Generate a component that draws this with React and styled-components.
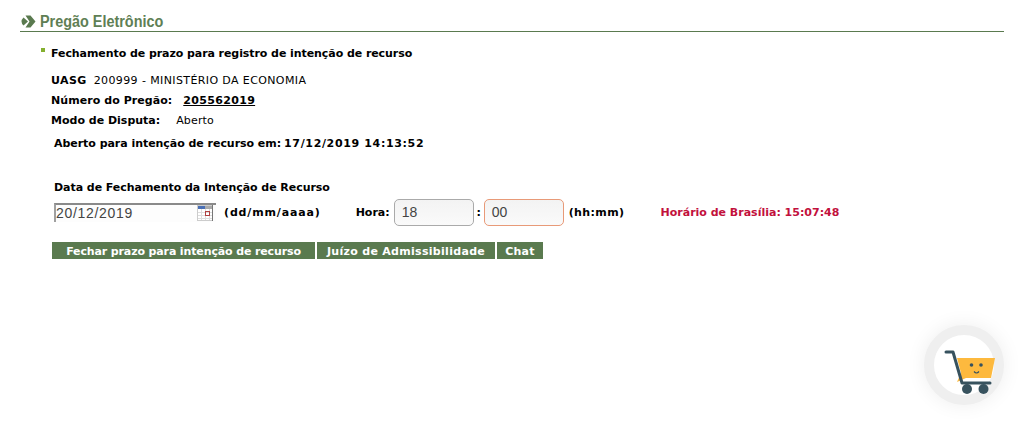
import React from 'react';
import styled, { createGlobalStyle } from 'styled-components';

const GlobalStyle = createGlobalStyle`
  html, body { margin: 0; padding: 0; background: #fff; }
  body { font-family: "DejaVu Sans", Verdana, sans-serif; font-size: 11px; color: #000; }
`;

const Page = styled.div`
  position: relative;
  height: 425px;
  overflow: hidden;
  padding: 12px 20px 0;
  box-sizing: border-box;
`;

const Header = styled.div`
  display: flex;
  align-items: center;
  gap: 4px;
  height: 19px;
  border-bottom: 1px solid #5a7a4f;
  padding-left: 1px;
`;

const Title = styled.h1`
  margin: 0;
  font: bold 16px "Liberation Sans", sans-serif;
  color: #5f7f55;
  transform: scaleX(0.9);
  transform-origin: left center;
`;

const Section = styled.div`
  padding: 0 0 0 31px;
`;

const SectionTitle = styled.h2`
  position: relative;
  margin: 15px 0 0;
  font-size: 11px;
  line-height: 13px;
  font-weight: bold;
  letter-spacing: -0.07px;
  &::before {
    content: "";
    position: absolute;
    left: -10px;
    top: 1px;
    width: 4px;
    height: 4px;
    background: #84b02f;
  }
`;

const InfoList = styled.div`
  margin-top: 14px;
  display: flex;
  flex-direction: column;
  gap: 7px;
`;

const InfoRow = styled.div`
  display: flex;
  line-height: 13px;
  gap: ${p => p.$gap || 8}px;
`;

const Label = styled.span`
  font-weight: bold;
  letter-spacing: ${p => p.$spacing || 0}px;
`;

const Value = styled.span`
  letter-spacing: ${p => p.$spacing || 0}px;
`;

const Number = styled.span`
  font-weight: bold;
  text-decoration: underline;
  letter-spacing: 0.33px;
`;

const Opened = styled.div`
  display: flex;
  gap: 3px;
  margin: 10px 0 0 3px;
  line-height: 13px;
`;

const DateLabel = styled.div`
  margin: 31px 0 0 3px;
  font-weight: bold;
  line-height: 13px;
  letter-spacing: -0.05px;
`;

const FormRow = styled.div`
  display: flex;
  align-items: center;
  height: 27px;
  margin: 5px 0 0 3px;
  font-weight: bold;
`;

const DateBox = styled.div`
  position: relative;
  width: 162px;
  height: 19px;
  box-sizing: border-box;
  border-top: 2px solid #8a8a8a;
  border-left: 2px solid #a0a0a0;
  background: #fdfdfd;
`;

const DateValue = styled.span`
  font: 14px/17px "Liberation Sans", sans-serif;
  letter-spacing: 0.7px;
  color: #444;
`;

const CalendarIcon = styled.svg`
  position: absolute;
  right: 3px;
  top: 0;
`;

const Hint = styled.span`
  margin-left: ${p => p.$left || 0}px;
  letter-spacing: ${p => p.$spacing || 0}px;
`;

const TimeInput = styled.div`
  width: 80px;
  height: 27px;
  box-sizing: border-box;
  border: 1px solid ${p => (p.$focused ? '#e89a78' : '#aaaaaa')};
  border-radius: 5px;
  background: linear-gradient(#f3f3f3, #fafafa);
  padding-left: 7px;
  font: normal 14px/25px "Liberation Sans", sans-serif;
  color: #444;
`;

const Clock = styled.span`
  margin-left: 35px;
  margin-right: 4px;
`;

const Colon = styled.span`
  width: 10px;
  text-align: center;
`;

const BrasiliaTime = styled.span`
  margin-left: 36px;
  color: #c2103c;
`;

const Buttons = styled.div`
  display: flex;
  gap: 2px;
  margin-top: 16px;
  margin-left: 1px;
`;

const Button = styled.button`
  height: 17px;
  padding: 2px 0 0;
  width: ${p => p.$width}px;
  border: 0;
  background: #5a7a4f;
  color: #fff;
  font: bold 11px/15px "DejaVu Sans", Verdana, sans-serif;
  letter-spacing: ${p => p.$spacing || 0}px;
`;

const CartBadge = styled.div`
  position: absolute;
  left: 924px;
  top: 325px;
  width: 60px;
  height: 60px;
  border: 10px solid #efefef;
  border-radius: 50%;
  background: #fff;
  box-shadow: 0 0 20px rgba(0, 0, 0, 0.07);
`;

const Chevron = () => (
  <svg width="15" height="15" viewBox="0 0 15 15">
    <path d="M2.500 3.500L7 7.500L2.500 11.500Q0.500 9.500 0.500 7.500Q0.500 5.500 2.500 3.500Z" fill="#5a7a4f" />
    <path d="M4.500 1.500H9.500L14.500 7.500L9.500 13.500H4.500L8.500 7.500Z" fill="#5a7a4f" />
  </svg>
);

const Calendar = () => (
  <CalendarIcon width="16" height="16" viewBox="0 0 16 16">
    <rect x="0.500" y="0.500" width="15" height="15" fill="#fff" stroke="#ccc" />
    <rect x="1" y="1" width="7" height="3" fill="#4a6fb5" />
    <rect x="8" y="1" width="7" height="3" fill="#aaa" />
    <path d="M1 7.500h14M1 10.500h14M1 13.500h14M4.500 4v11M8.500 4v11M12.500 4v11" stroke="#ddd" fill="none" />
    <rect x="8.500" y="6.500" width="4" height="4" fill="none" stroke="#b04040" />
    <path d="M15.500 0v16" stroke="#777" />
  </CalendarIcon>
);

const Cart = () => (
  <svg width="60" height="60" viewBox="0 0 60 60" style={{ overflow: 'visible' }}>
    <path d="M23 23H61L57 43H32L23 47L27 38Z" fill="#fdb93e" />
    <path d="M12 17H19L28 48H56" stroke="#37525e" strokeWidth="3" fill="none" strokeLinecap="round" strokeLinejoin="round" />
    <circle cx="33" cy="54" r="5" fill="#37525e" />
    <circle cx="49.500" cy="54" r="5" fill="#37525e" />
    <circle cx="37.500" cy="30" r="1.800" fill="#37525e" />
    <circle cx="47" cy="30" r="1.800" fill="#37525e" />
    <path d="M40 36.500q2.500 3 5 0" stroke="#37525e" strokeWidth="1.200" fill="none" />
  </svg>
);

export default function App() {
  return (
    <Page>
      <GlobalStyle />
      <Header>
        <Chevron />
        <Title>Pregão Eletrônico</Title>
      </Header>
      <Section>
        <SectionTitle>Fechamento de prazo para registro de intenção de recurso</SectionTitle>
        <InfoList>
          <InfoRow $gap={7}>
            <Label $spacing={0.4}>UASG</Label>
            <Value $spacing={0.39}>200999 - MINISTÉRIO DA ECONOMIA</Value>
          </InfoRow>
          <InfoRow $gap={11}>
            <Label $spacing={0.06}>Número do Pregão:</Label>
            <Number>205562019</Number>
          </InfoRow>
          <InfoRow $gap={16}>
            <Label>Modo de Disputa:</Label>
            <Value $spacing={0.15}>Aberto</Value>
          </InfoRow>
        </InfoList>
        <Opened>
          <Label $spacing={-0.04}>Aberto para intenção de recurso em:</Label>
          <Label $spacing={0.65}>17/12/2019 14:13:52</Label>
        </Opened>
        <DateLabel>Data de Fechamento da Intenção de Recurso</DateLabel>
        <FormRow>
          <DateBox>
            <DateValue>20/12/2019</DateValue>
            <Calendar />
          </DateBox>
          <Hint $left={8} $spacing={0.85}>(dd/mm/aaaa)</Hint>
          <Clock>Hora:</Clock>
          <TimeInput>18</TimeInput>
          <Colon>:</Colon>
          <TimeInput $focused>00</TimeInput>
          <Hint $left={5} $spacing={0.4}>(hh:mm)</Hint>
          <BrasiliaTime>Horário de Brasília: 15:07:48</BrasiliaTime>
        </FormRow>
        <Buttons>
          <Button $width={263} $spacing={-0.13}>Fechar prazo para intenção de recurso</Button>
          <Button $width={178} $spacing={0.3}>Juízo de Admissibilidade</Button>
          <Button $width={46} $spacing={0.25}>Chat</Button>
        </Buttons>
      </Section>
      <CartBadge>
        <Cart />
      </CartBadge>
    </Page>
  );
}
